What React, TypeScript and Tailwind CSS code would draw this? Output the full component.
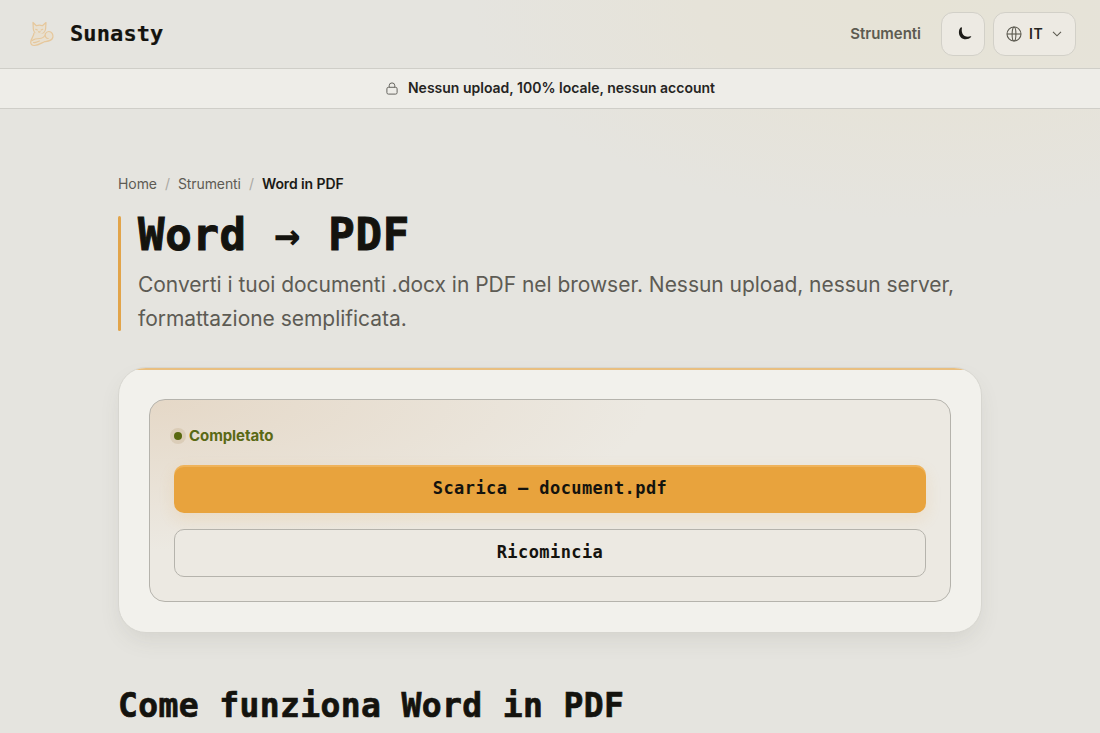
import React from "react";

const mono = "font-['DejaVu_Sans_Mono',monospace] font-bold text-[#14130e]";

const CatLogo = () => (
  <svg
    width="28"
    height="28"
    viewBox="0 0 28 28"
    fill="none"
    stroke="#e8b979"
    strokeWidth="1.200"
    strokeLinecap="round"
    strokeLinejoin="round"
    opacity="0.65"
  >
    <path
      d="M5 2.500 5.300 9c.3 3 2.700 5.500 6 5.500s6-2.500 6.300-5.500l.4-6.500-3.600 3.200c-2-.7-4-.7-6 0z"
      fill="#eadfcb"
    />
    <path
      d="M6 13c0 3.500-3.500 6-3.300 9.500.1 2 1.500 3.200 3.800 3 4-.3 7-2.500 10-3.800 3.500-.5 7.500-.7 8.300-4.200.6-3-1-6-4-6-1.700 0-2.800.9-3.500 2.300"
      fill="#eadfcb"
    />
    <path d="M7.700 9.300l1.600.7M14.700 9.300l-1.600.7M10.500 11.700l.8.500.8-.5" />
    <path d="M4 20.500c2-1.500 4.500-2 7.500-2s4.500-1.500 5.700-3.500M17.200 14c-.2 3 1 4.500 3 4.500M5.500 22.500c2 .5 4-1 6-1.500" />
  </svg>
);

const MoonIcon = () => (
  <svg width="14" height="14" viewBox="0 0 14 14" fill="#1d1c18">
    <path d="M2.700.5C.4 2.700.2 7.500 2.700 10.200c2.700 2.900 7.500 2.800 10.400-.1.400-.5 0-1-.6-.8C9 10.200 5.800 9.300 4.400 6.400 3.600 4.700 3.600 2.900 4 1.100 4.100.300 3.300-.1 2.700.5z" />
  </svg>
);

const GlobeIcon = () => (
  <svg width="16" height="16" viewBox="0 0 16 16" fill="none" stroke="#5b594f" strokeWidth="1.100">
    <circle cx="8" cy="8" r="7" />
    <ellipse cx="8" cy="8" rx="1.900" ry="7" />
    <path d="M1 8h14" />
  </svg>
);

const LockIcon = () => (
  <svg
    width="12"
    height="13"
    viewBox="0 0 12 13"
    fill="none"
    stroke="#65645e"
    strokeLinejoin="round"
  >
    <rect x="0.900" y="5.300" width="10.200" height="6.800" rx="1.500" />
    <path d="M3.200 5.300V3.700a2.800 2.800 0 0 1 5.600 0v1.600" />
  </svg>
);

const Header = () => (
  <header className="flex h-[69px] items-center border-b border-[#cfcec8] pl-[28px] pr-6">
    <CatLogo />
    <span className={`${mono} ml-[14px] text-[22px] leading-7 tracking-[0.1px] [-webkit-text-stroke:0.2px_#14130e]`}>
      Sunasty
    </span>
    <nav className="ml-auto flex items-center">
      <a className="mr-5 text-[15px] font-semibold tracking-[-0.03px] text-[#5d5b51]">
        Strumenti
      </a>
      <button className="mr-2 flex h-11 w-11 items-center justify-center rounded-xl border border-[#d2d0c8] bg-[#edeae3] pb-px pl-[3px]">
        <MoonIcon />
      </button>
      <button className="flex h-11 w-[83px] items-center rounded-xl border border-[#d2d0c8] bg-[#edeae3] pl-3">
        <GlobeIcon />
        <span className="ml-[7px] text-sm font-semibold tracking-[0.5px] text-[#25241f]">
          IT
        </span>
        <svg
          className="ml-[9px]"
          width="10"
          height="6"
          viewBox="0 0 10 6"
          fill="none"
          stroke="#5b594f"
          strokeWidth="1.100"
        >
          <path d="M1 .8l4 4 4-4" />
        </svg>
      </button>
    </nav>
  </header>
);

const App = () => {
  return (
    <div className="h-[733px] overflow-hidden bg-[#e5e4df] bg-[radial-gradient(ellipse_460px_220px_at_930px_0px,#e6e3d6_0%,#e6e3d9_50%,#e5e4df00_100%)] font-[Inter,sans-serif]">
      <Header />
      <div className="flex h-10 items-center justify-center gap-[10px] border-b border-[#cfcec8] bg-[#eeede8] pb-px pl-px">
        <LockIcon />
        <span className="text-sm font-semibold text-[#25241f]">
          Nessun upload, 100% locale, nessun account
        </span>
      </div>

      <main className="mx-auto w-[864px] pt-[65px]">
        <nav className="flex gap-2 text-sm tracking-[-0.08px] text-[#5d5b54]">
          <a>Home</a>
          <span className="text-[#aaa8a2]">/</span>
          <a>Strumenti</a>
          <span className="text-[#aaa8a2]">/</span>
          <span className="font-semibold tracking-[-0.1px] text-[#1b1a16]">Word in PDF</span>
        </nav>

        <div className="mt-[22px] flex h-[115px]">
          <div className="w-[3px] shrink-0 rounded-full bg-[#e2a44a]" />
          <div className="ml-[17px]">
            <h1 className={`${mono} whitespace-nowrap text-[44px] leading-[37px] tracking-[0.7px] [-webkit-text-stroke:1px_#14130e]`}>
              Word <span className="[-webkit-text-stroke:0]">→</span> PDF
            </h1>
            <p className="mt-[15px] text-[21px] leading-[34px] tracking-[-0.03px] text-[#5d5b54]">
              Converti i tuoi documenti .docx in PDF nel browser. Nessun upload,
              nessun server, formattazione semplificata.
            </p>
          </div>
        </div>

        {/* result card */}
        <section className="mt-[36px] overflow-hidden rounded-[28px] border border-[#d7d6d0] bg-[#f2f1ec] shadow-[0_10px_24px_-6px_rgba(80,78,60,0.13)]">
          <div className="h-[2px] bg-[#e9bf80]" />
          <div className="px-[30px] pb-[30px] pt-[29px]">
            <div className="flex h-[203px] flex-col rounded-2xl border border-[#b5b3ac] bg-[#ece9e2] bg-[radial-gradient(ellipse_500px_150px_at_0_0,#e5d8c7,#ece9e200)] px-6 pt-6">
              <div className="flex h-6 items-center gap-[7px] text-[15px] font-bold tracking-[-0.08px] text-[#5a6915]">
                <span className="h-2 w-2 rounded-full bg-[#58680f] shadow-[0_0_0_4px_rgba(150,110,50,0.14)]" />
                Completato
              </div>
              <button
                className={`${mono} mt-[17px] h-12 rounded-[10px] bg-[#e8a33d] text-[17px] tracking-[0.42px] shadow-[inset_0_2px_0_rgba(255,220,160,0.3),0_6px_16px_rgba(232,163,61,0.15)]`}
              >
                Scarica — document.pdf
              </button>
              <button
                className={`${mono} mt-4 h-12 rounded-[10px] border border-[#b5b3ac] bg-[#ece9e2] text-[17px] tracking-[0.42px]`}
              >
                Ricomincia
              </button>
            </div>
          </div>
        </section>

        <h2 className={`${mono} mt-[53px] whitespace-nowrap text-[33px] leading-[40px] tracking-[0.38px] [-webkit-text-stroke:0.7px_#14130e]`}>
          Come funziona Word in PDF
        </h2>
      </main>
    </div>
  );
};

export default App;
